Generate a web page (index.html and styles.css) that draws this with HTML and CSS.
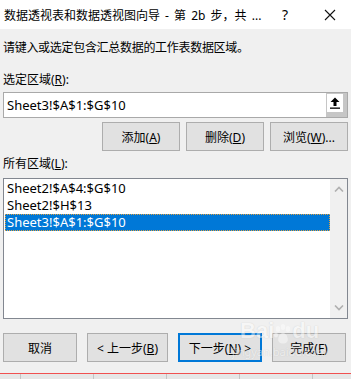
FILE: index.html
```html
<!DOCTYPE html>
<html lang="zh-CN">
<head>
    <meta charset="UTF-8">
    <title>数据透视表和数据透视图向导</title>
    <link rel="stylesheet" href="styles.css">
</head>
<body>
    <div class="dialog">
        <div class="titlebar">
            <span class="title">数据透视表和数据透视图向导 - 第 2b 步，共 ...</span>
            <span class="help">?</span>
            <svg class="close" width="12" height="12" viewBox="0 0 12 12">
                <path d="M1 1 L11 11 M11 1 L1 11" stroke="#111" stroke-width="1.1" fill="none"/>
            </svg>
        </div>

        <div class="content">
            <p class="intro">请键入或选定包含汇总数据的工作表数据区域。</p>

            <label class="field-label">选定区域(<u>R</u>):</label>
            <div class="range-input">
                <span class="range-value">Sheet3!$A$1:$G$10</span>
                <span class="collapse-btn">
                    <span class="collapse-face">
                        <svg width="10" height="12" viewBox="0 0 10 12">
                            <path d="M5 0.5 L9.5 5 L6.5 5 L6.5 9 L3.5 9 L3.5 5 L0.5 5 Z" fill="#000"/>
                            <rect x="0" y="10.5" width="10" height="1.3" fill="#000"/>
                        </svg>
                    </span>
                </span>
            </div>

            <div class="btn-row">
                <button class="btn">添加(<u>A</u>)</button>
                <button class="btn">删除(<u>D</u>)</button>
                <button class="btn">浏览(<u>W</u>)...</button>
            </div>

            <label class="field-label second">所有区域(<u>L</u>):</label>
            <div class="listbox">
                <ul class="list-items">
                    <li>Sheet2!$A$4:$G$10</li>
                    <li>Sheet2!$H$13</li>
                    <li class="selected">Sheet3!$A$1:$G$10</li>
                </ul>
                <div class="scrollbar">
                    <svg width="10" height="6" viewBox="0 0 10 6"><path d="M1 5.5 L5 1.5 L9 5.5" stroke="#b0b0b0" stroke-width="1.6" fill="none"/></svg>
                    <svg width="10" height="6" viewBox="0 0 10 6"><path d="M1 0.5 L5 4.5 L9 0.5" stroke="#b0b0b0" stroke-width="1.6" fill="none"/></svg>
                </div>
            </div>

            <div class="footer">
                <button class="btn">取消</button>
                <button class="btn">&lt; 上一步(<u>B</u>)</button>
                <button class="btn default">下一步(<u>N</u>) &gt;</button>
                <button class="btn">完成(<u>F</u>)</button>
            </div>
        </div>

        <div class="sheet-strip">
            <span class="cell first"></span>
            <span class="cell"></span>
            <span class="cell"></span>
            <span class="cell"></span>
            <span class="cell"></span>
        </div>

        <!-- watermark over the footer -->
        <div class="watermark">
            <span class="wm-logo">Bai<svg width="18" height="20" viewBox="0 0 18 20">
                <ellipse cx="4" cy="5" rx="2.2" ry="3" fill="#fff"/>
                <ellipse cx="9" cy="3" rx="2.2" ry="3" fill="#fff"/>
                <ellipse cx="14" cy="5" rx="2.2" ry="3" fill="#fff"/>
                <ellipse cx="2" cy="11" rx="2" ry="2.6" fill="#fff"/>
                <path d="M9 9 C5 9 3 16 5 18 C7 20 11 20 13 18 C15 16 13 9 9 9 Z" fill="#fff"/>
            </svg>du</span>
            <span class="wm-url">jingyan.baidu.com</span>
        </div>
    </div>
</body>
</html>
```

FILE: styles.css
```css
body {
    margin: 0;
    width: 351px;
    height: 379px;
    overflow: hidden;
    font-family: "Noto Sans", "Noto Sans CJK SC", sans-serif;
    font-size: 12px;
    color: #000;
    background: #f0f0f0;
}
.dialog {
    position: relative;
    height: 379px;
    overflow: hidden;
}
.titlebar {
    height: 29px;
    background: #fff;
    display: flex;
    align-items: center;
    padding-left: 4px;
}
.title {
    font-size: 12px;
    flex: 1;
    min-width: 0;
    padding-top: 1px;
    white-space: nowrap;
    word-spacing: 2px;
}
.help {
    font-size: 14px;
    width: 12px;
    text-align: center;
    margin-right: 33px;
}
.close {
    margin-right: 15px;
}
.content {
    padding: 0 3px;
}
.intro {
    margin: 0;
    padding-top: 11px;
    line-height: 16px;
    letter-spacing: -0.3px;
}
.field-label {
    display: block;
    margin-top: 16px;
    line-height: 16px;
}
.field-label.second {
    margin-top: 5px;
}
.range-input {
    margin-top: 4px;
    height: 26px;
    box-sizing: border-box;
    border: 1px solid #a9a9a9;
    background: #fff;
    display: flex;
    align-items: center;
}
.range-value {
    flex: 1;
    padding-left: 3px;
    font-size: 13px;
}
.collapse-btn {
    width: 21px;
    height: 24px;
    box-sizing: border-box;
    background: #c6c6c6;
    padding: 1px 4px 5px 1px;
}
.collapse-face {
    display: flex;
    align-items: center;
    justify-content: center;
    height: 100%;
    background: #fff;
}
.btn-row {
    margin-top: 4px;
    display: flex;
    justify-content: flex-end;
    gap: 6px;
}
.btn {
    height: 29px;
    width: 78px;
    box-sizing: border-box;
    background: #e1e1e1;
    border: 1px solid #adadad;
    font-family: inherit;
    font-size: 12px;
    color: #000;
    padding: 0;
}
.btn.default {
    border: 2px solid #0078d7;
    width: 84px;
}
.listbox {
    margin-top: 6px;
    height: 141px;
    box-sizing: border-box;
    border: 1px solid #828790;
    background: #fff;
    display: flex;
}
.list-items {
    list-style: none;
    margin: 0;
    padding: 1px 0 0 1px;
    flex: 1;
}
.list-items li {
    height: 17px;
    line-height: 17px;
    padding-left: 2px;
    font-size: 13px;
}
.list-items li.selected {
    background: #0078d7;
    color: #fff;
    outline: 1px dotted #e0a040;
    outline-offset: -1px;
}
.scrollbar {
    width: 17px;
    background: #f0f0f0;
    display: flex;
    flex-direction: column;
    justify-content: space-between;
    align-items: center;
    padding: 7px 0 7px;
}
.footer {
    margin-top: 14px;
    display: flex;
    gap: 10px;
}
.footer .btn {
    width: 74px;
}
.footer .btn:nth-child(2) {
    width: 81px;
}
.footer .btn.default {
    width: 84px;
}
.sheet-strip {
    margin-top: 11px;
    border-top: 1px solid #f05050;
    height: 7px;
    background: #e6e6e6;
    display: flex;
}
.cell {
    width: 72px;
    border-right: 1px solid #c4c4c4;
    flex-shrink: 0;
}
.cell.first {
    width: 20px;
}
.watermark {
    position: absolute;
    left: 232px;
    top: 318px;
    display: flex;
    flex-direction: column;
    align-items: center;
    opacity: 0.45;
    pointer-events: none;
}
.wm-logo {
    font-family: "Liberation Sans", sans-serif;
    font-weight: bold;
    font-size: 22px;
    color: #fff;
    text-shadow: 0 0 1px #999;
    display: flex;
    align-items: flex-end;
}
.wm-url {
    font-size: 11px;
    color: #fff;
    text-shadow: 0 0 1px #999;
}
```
